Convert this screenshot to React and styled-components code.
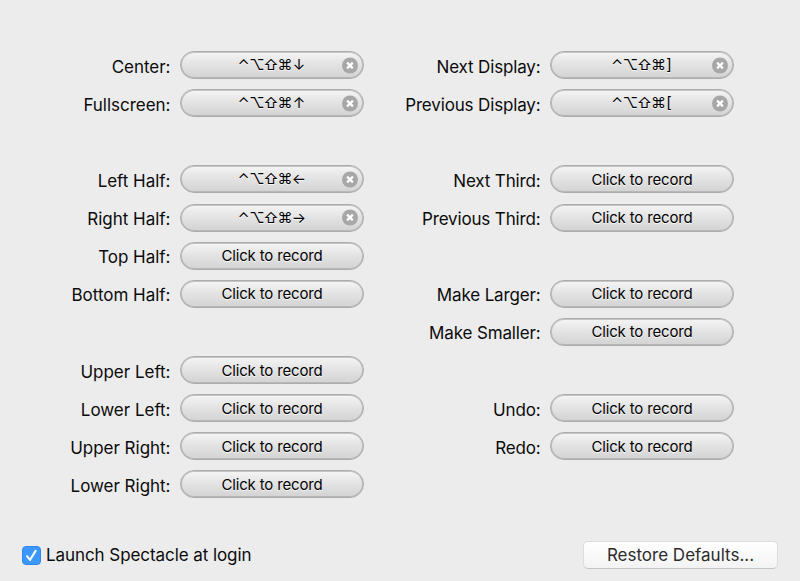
import React, { useState } from "react";
import styled, { createGlobalStyle } from "styled-components";

const GlobalStyle = createGlobalStyle`
  * { box-sizing: border-box; }
  body {
    margin: 0;
    background: #ececec;
    color: #0b0b0b;
    font-family: Inter, "Open Sans", sans-serif;
    overflow: hidden;
  }
`;

const Window = styled.main`
  display: flex;
  flex-direction: column;
  width: 800px;
  height: 581px;
  padding-top: 46px;
  background: #ececec;
`;

const Columns = styled.div`
  display: grid;
  grid-template-columns: 364px 370px;
  height: 458px;
`;

const Column = styled.div`
  display: grid;
  grid-template-rows: repeat(12, 38.13px);
  letter-spacing: ${(p) => p.$tracking}px;
`;

const Row = styled.div`
  grid-row: ${(p) => p.$slot};
  display: flex;
  justify-content: flex-end;
  align-items: center;
  height: 38.13px;
`;

const Label = styled.span`
  margin-right: 9.5px;
  padding-top: 3px;
  font-size: 17px;
  line-height: 22px;
  white-space: nowrap;
`;

const Recorder = styled.button`
  display: grid;
  grid-template-columns: 1fr auto 1fr;
  align-items: center;
  width: 184px;
  height: 28px;
  padding: 0 5px;
  border: 1px solid #acacac;
  border-radius: 14px;
  background: linear-gradient(#f5f5f5, #e4e4e4 45%, #d3d3d3);
  box-shadow: inset 0 0 0 1px rgba(165, 165, 165, 0.6);
  color: #000;
  font-family: inherit;
  font-size: 15px;
  line-height: 20px;
  text-shadow: 0 1px 0 rgba(255, 255, 255, 0.8);
`;

const Prompt = styled.span`
  grid-column: 2;
  padding-top: 1px;
  letter-spacing: -0.16px;
  white-space: nowrap;
`;

const Keys = styled.span`
  grid-column: 2;
  display: flex;
  align-items: center;
  margin-right: 1px;
  letter-spacing: 0;
`;

const Key = styled.span`
  display: flex;
  justify-content: center;
  width: ${(p) => p.$width}px;
`;

const Clear = styled.svg`
  grid-column: 3;
  justify-self: end;
  width: 17px;
  height: 17px;
`;

const Footer = styled.footer`
  display: flex;
  justify-content: space-between;
  align-items: center;
  margin: 36px 22px 0;
  height: 30px;
`;

const CheckLabel = styled.label`
  display: flex;
  align-items: center;
  gap: 5px;
  font-size: 17px;
  line-height: 22px;
  letter-spacing: -0.07px;
`;

const HiddenInput = styled.input`
  display: none;
`;

const CheckBox = styled.svg`
  width: 19px;
  height: 19px;
`;

const RestoreButton = styled.button`
  width: 195px;
  height: 28px;
  padding: 0;
  border: 1px solid #dcdcdc;
  border-bottom-color: #c4c4c4;
  border-radius: 5px;
  background: linear-gradient(#fff, #f3f3f3);
  color: #2c2c2c;
  font-family: inherit;
  font-size: 17px;
  line-height: 22px;
  letter-spacing: 0;
`;

const LEFT = [
  [1, "Center:", "↓"],
  [2, "Fullscreen:", "↑"],
  [4, "Left Half:", "←"],
  [5, "Right Half:", "→"],
  [6, "Top Half:"],
  [7, "Bottom Half:"],
  [9, "Upper Left:"],
  [10, "Lower Left:"],
  [11, "Upper Right:"],
  [12, "Lower Right:"],
];

const RIGHT = [
  [1, "Next Display:", "]"],
  [2, "Previous Display:", "["],
  [4, "Next Third:"],
  [5, "Previous Third:"],
  [7, "Make Larger:"],
  [8, "Make Smaller:"],
  [10, "Undo:"],
  [11, "Redo:"],
];

function ShortcutRow({ slot, label, keyName }) {
  return (
    <Row $slot={slot}>
      <Label>{label}</Label>
      <Recorder type="button">
        {keyName ? (
          <>
            <Keys>
              <Key $width={13}>⌃</Key>
              <Key $width={14}>⌥</Key>
              <Key $width={14}>⇧</Key>
              <Key $width={14}>⌘</Key>
              <Key $width={"[]".includes(keyName) ? 7 : 14}>{keyName}</Key>
            </Keys>
            <Clear viewBox="0 0 17 17">
              <circle cx="9" cy="8.5" r="8" fill="#a7a7a7" />
              <path d="M6.1 5.6l5.8 5.8M11.9 5.6l-5.8 5.8" stroke="#fff" strokeWidth="2.2" />
            </Clear>
          </>
        ) : (
          <Prompt>Click to record</Prompt>
        )}
      </Recorder>
    </Row>
  );
}

function ShortcutColumn({ items, tracking }) {
  return (
    <Column $tracking={tracking}>
      {items.map(([slot, label, keyName]) => (
        <ShortcutRow key={label} slot={slot} label={label} keyName={keyName} />
      ))}
    </Column>
  );
}

export default function App() {
  const [launch, setLaunch] = useState(true);
  return (
    <>
      <GlobalStyle />
      <Window>
        <Columns>
          <ShortcutColumn items={LEFT} tracking={-0.02} />
          <ShortcutColumn items={RIGHT} tracking={-0.15} />
        </Columns>
        <Footer>
          <CheckLabel>
            <HiddenInput type="checkbox" checked={launch} onChange={() => setLaunch(!launch)} />
            <CheckBox viewBox="0 0 19 19">
              <rect x="0.5" y="0.5" width="18" height="18" rx="3.5" fill={launch ? "#3d98fb" : "#fff"} stroke={launch ? "#2f86f0" : "#bbb"} />
              {launch && (
                <path d="M5 10.2l3 3.7 5.6-9" fill="none" stroke="#fff" strokeWidth="2" strokeLinecap="round" strokeLinejoin="round" />
              )}
            </CheckBox>
            Launch Spectacle at login
          </CheckLabel>
          <RestoreButton type="button">Restore Defaults...</RestoreButton>
        </Footer>
      </Window>
    </>
  );
}
